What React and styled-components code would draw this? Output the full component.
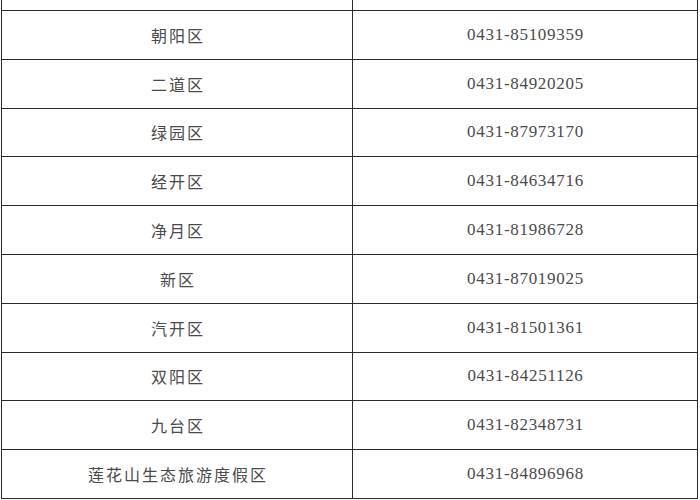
import React from 'react';
import styled, { createGlobalStyle } from 'styled-components';

const GlobalStyle = createGlobalStyle`
  html, body {
    margin: 0;
    padding: 0;
    background: #ffffff;
  }
  body {
    width: 700px;
    height: 500px;
    overflow: hidden;
  }
`;

const Page = styled.div`
  width: 700px;
  height: 500px;
  overflow: hidden;
  background: #ffffff;
`;

const Table = styled.div`
  display: grid;
  grid-template-columns: 351px 345px;
  grid-template-rows: 11px;
  grid-auto-rows: 48.8px;
  margin-left: 1px;
  border-left: 1px solid #2a2a2a;
  width: fit-content;
`;

const Cell = styled.div`
  display: flex;
  align-items: center;
  justify-content: center;
  border-right: 1px solid #2a2a2a;
  border-bottom: 1px solid #2a2a2a;
  color: #4a4a4a;
  white-space: nowrap;
  font-size: ${(p) => (p.$phone ? '17px' : '16px')};
  font-family: ${(p) => (p.$phone ? '"Liberation Serif", "Noto Sans CJK SC", serif' : '"Noto Sans CJK SC", sans-serif')};
  letter-spacing: ${(p) => (p.$phone ? '0.7px' : '2px')};
  padding-left: ${(p) => (p.$phone ? '1px' : '2px')};
`;

const rows = [
  ['朝阳区', '0431-85109359'],
  ['二道区', '0431-84920205'],
  ['绿园区', '0431-87973170'],
  ['经开区', '0431-84634716'],
  ['净月区', '0431-81986728'],
  ['新区', '0431-87019025'],
  ['汽开区', '0431-81501361'],
  ['双阳区', '0431-84251126'],
  ['九台区', '0431-82348731'],
  ['莲花山生态旅游度假区', '0431-84896968'],
];

export default function App() {
  return (
    <Page>
      <GlobalStyle />
      <Table>
        <Cell />
        <Cell $phone />
        {rows.map(([area, phone]) => (
          <React.Fragment key={area}>
            <Cell>{area}</Cell>
            <Cell $phone>{phone}</Cell>
          </React.Fragment>
        ))}
      </Table>
    </Page>
  );
}
